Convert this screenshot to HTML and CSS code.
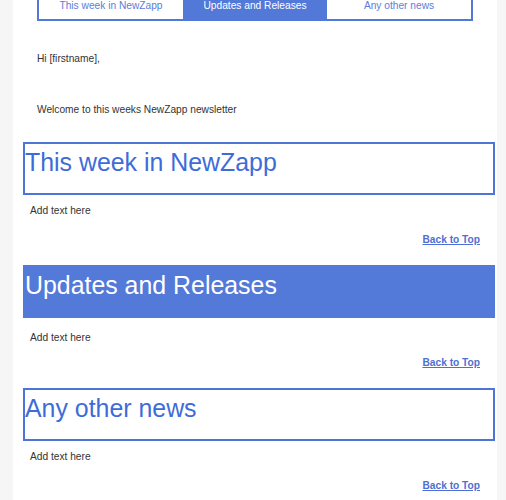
FILE: index.html
```html
<!DOCTYPE html>
<html lang="en">
<head>
<meta charset="utf-8">
<title>NewZapp newsletter</title>
<link rel="stylesheet" href="styles.css">
</head>
<body>
<div class="page">
  <nav class="tabs">
    <a class="tab" href="#s1">This week in NewZapp</a>
    <a class="tab tab-active" href="#s2">Updates and Releases</a>
    <a class="tab" href="#s3">Any other news</a>
  </nav>
  <p class="greeting">Hi [firstname],</p>
  <p class="intro">Welcome to this weeks NewZapp newsletter</p>

  <section class="section" id="s1">
    <h2 class="heading">This week in NewZapp</h2>
    <p class="body-text">Add text here</p>
    <p class="back"><a href="#top">Back to Top</a></p>
  </section>

  <section class="section section-filled" id="s2">
    <h2 class="heading">Updates and Releases</h2>
    <p class="body-text">Add text here</p>
    <p class="back"><a href="#top">Back to Top</a></p>
  </section>

  <section class="section" id="s3">
    <h2 class="heading">Any other news</h2>
    <p class="body-text">Add text here</p>
    <p class="back"><a href="#top">Back to Top</a></p>
  </section>
</div>
</body>
</html>
```

FILE: styles.css
```css
html, body {
  margin: 0;
  padding: 0;
  background: #f6f6f6;
}

body {
  font-family: "Liberation Sans", Arial, sans-serif;
  font-size: 10.2px;
  color: #333333;
}

.page {
  width: 484px;
  margin: -9px 0 0 13px;
  background: #ffffff;
  padding-bottom: 20px;
}

.tabs {
  display: grid;
  grid-template-columns: repeat(3, 1fr);
  margin: 0 24px;
  border: 2px solid #5278d8;
}

.tab {
  display: block;
  height: 26px;
  line-height: 26px;
  text-align: center;
  text-decoration: none;
  color: #5d7dd9;
  font-size: 10.2px;
}

.tab-active {
  background: #5278d8;
  color: #ffffff;
}

.greeting,
.intro {
  margin: 0;
  padding-left: 24px;
  line-height: 14px;
}

.greeting {
  margin-top: 31px;
}

.intro {
  margin-top: 37px;
  margin-bottom: 25px;
}

.section {
  padding-bottom: 18px;
}

.heading {
  box-sizing: border-box;
  height: 53px;
  margin: 0 2px 0 10px;
  padding: 4px 0 0;
  border: 2px solid #4d74d8;
  font-weight: normal;
  font-size: 24.9px;
  line-height: 28px;
  color: #3d6cd8;
}

.section-filled .heading {
  background: #5379d9;
  border-color: #5379d9;
  color: #ffffff;
}

.body-text {
  margin: 9px 0 0;
  padding-left: 17px;
  line-height: 14px;
}

.section-filled .body-text {
  margin-top: 13px;
}

.back {
  margin: 15px 0 0;
  padding-right: 17px;
  text-align: right;
  line-height: 14px;
}

.section-filled .back {
  margin-top: 11px;
}

.back a {
  color: #4f6fd2;
  font-weight: bold;
  text-decoration: underline;
}
```
